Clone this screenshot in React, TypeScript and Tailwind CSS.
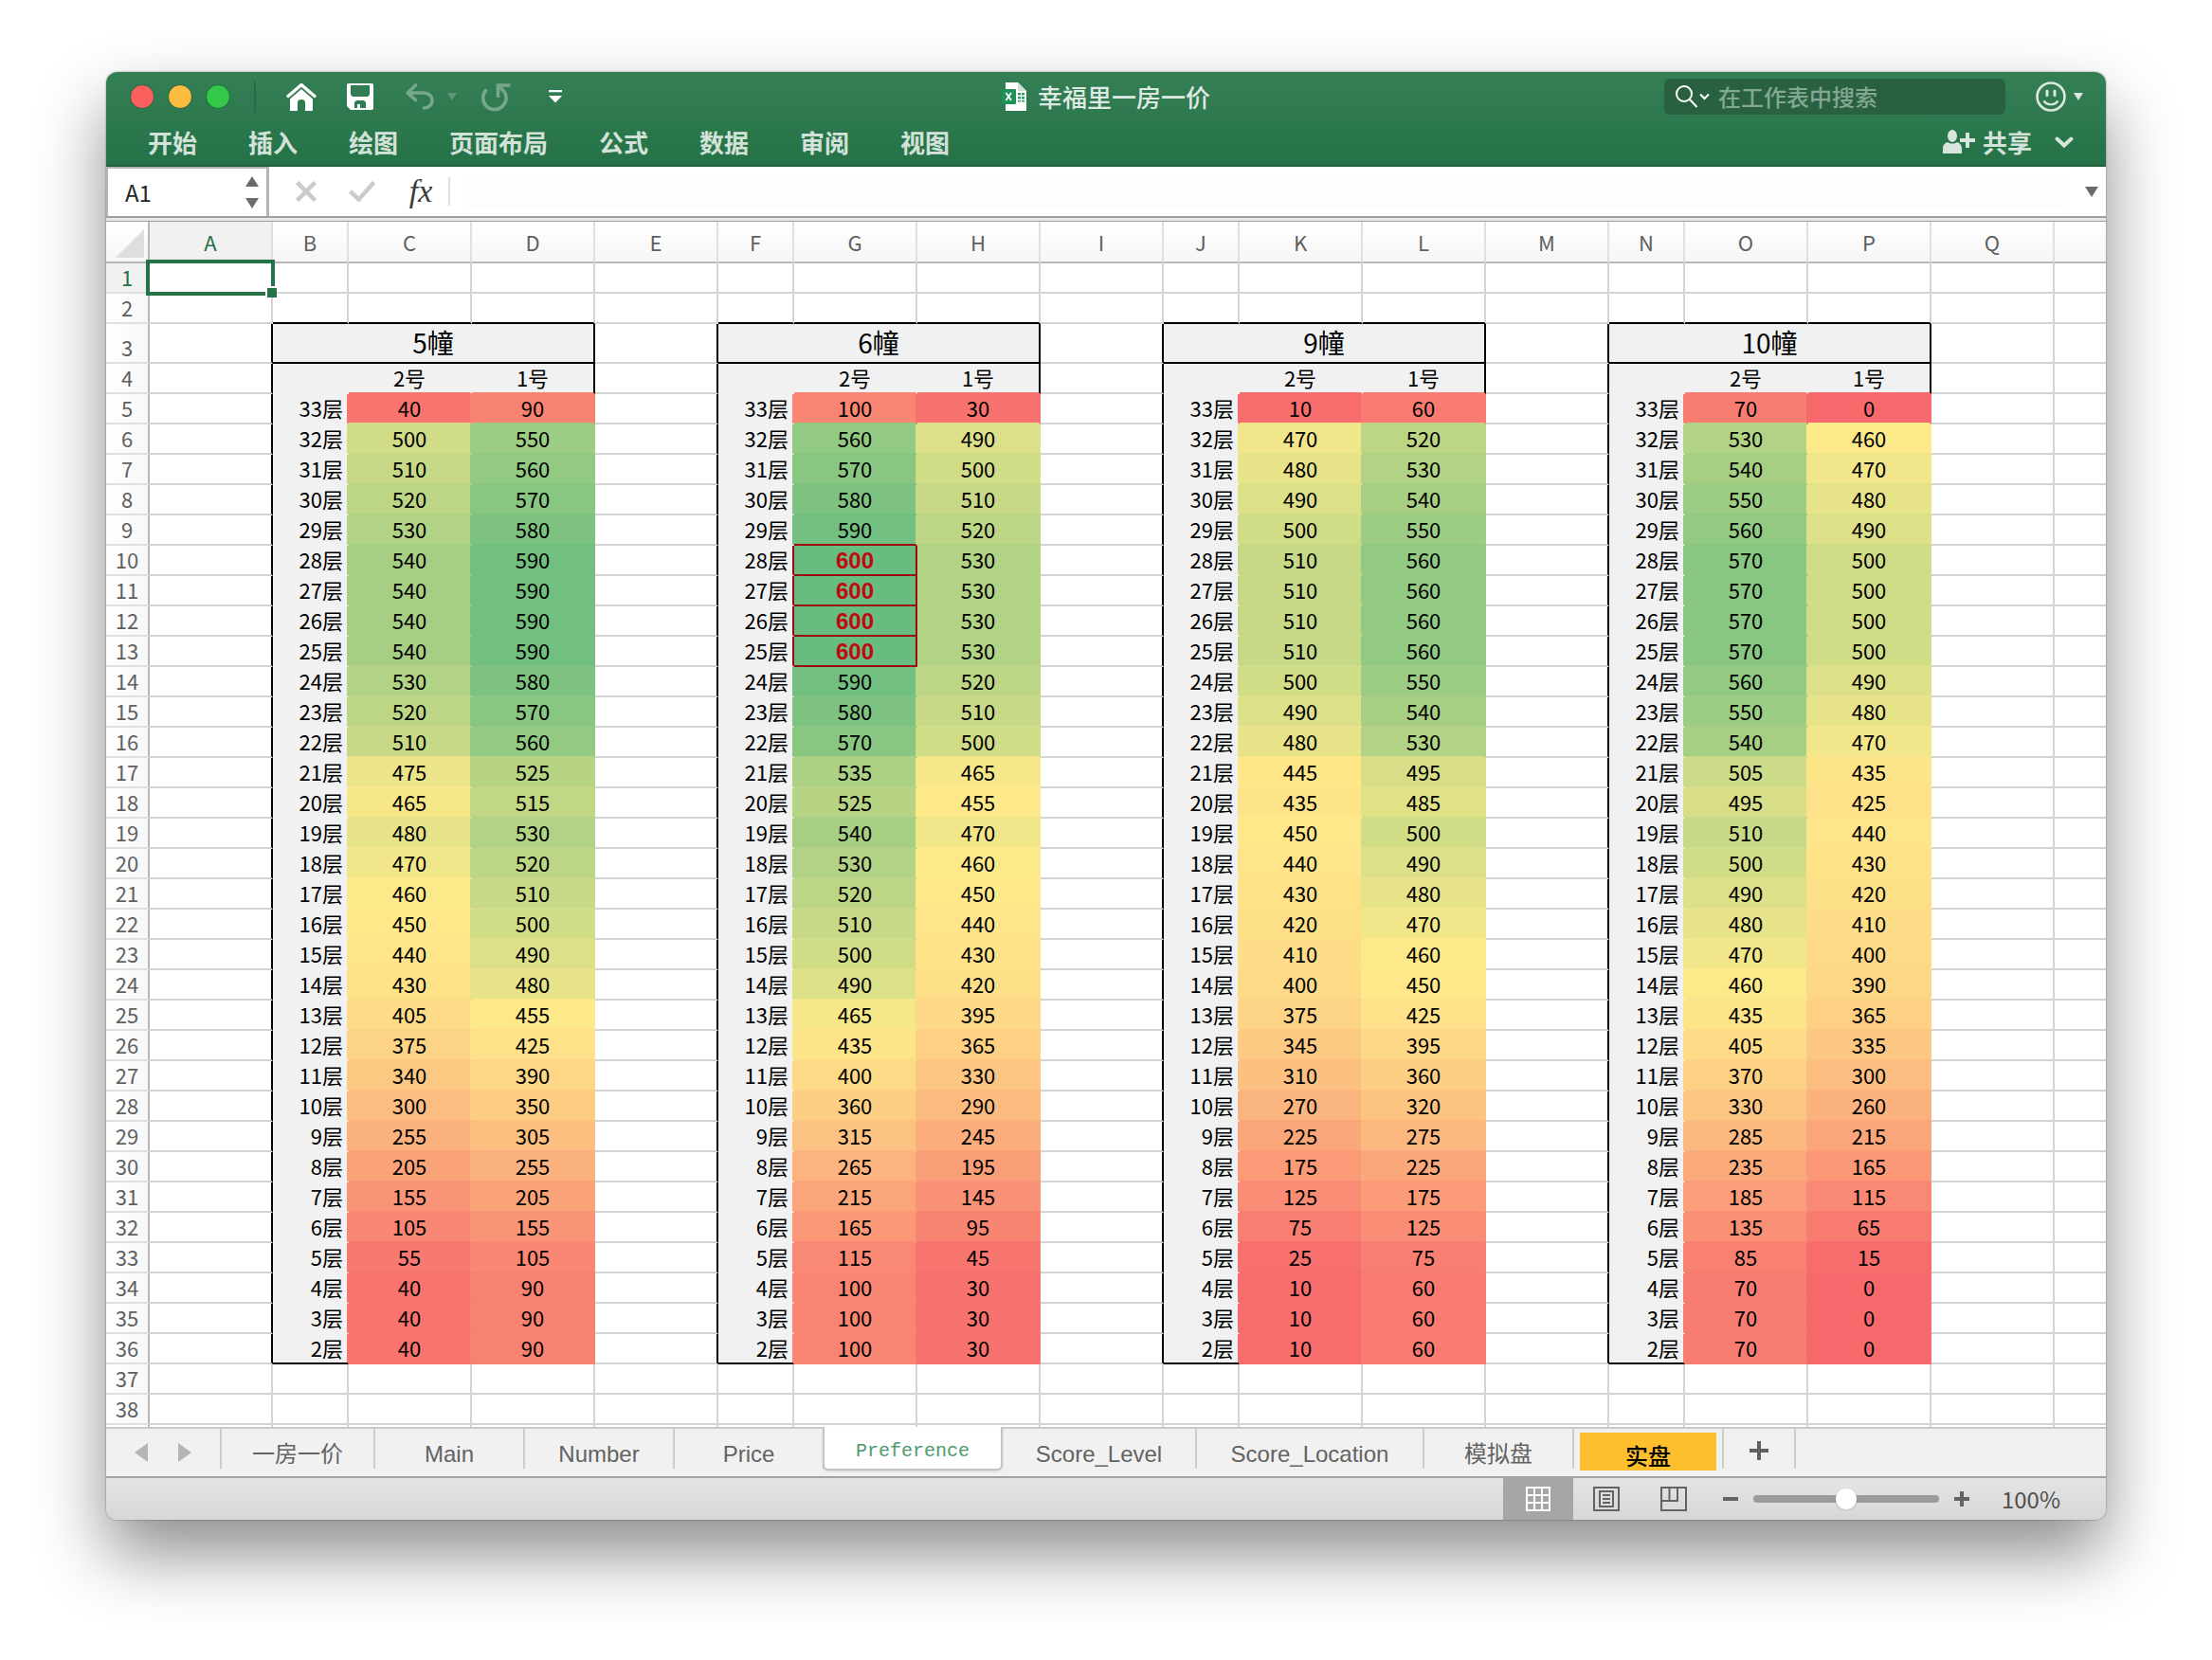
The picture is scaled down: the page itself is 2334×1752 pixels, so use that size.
import { Fragment, useState } from 'react'

const COLUMNS = ['A', 'B', 'C', 'D', 'E', 'F', 'G', 'H', 'I', 'J', 'K', 'L', 'M', 'N', 'O', 'P', 'Q', '']
const ROWS = Array.from({ length: 38 }, (_, i) => i + 1)
const MENUS = ['开始', '插入', '绘图', '页面布局', '公式', '数据', '审阅', '视图']

const BUILDINGS = [
  { name: '5幢', offsets: [0, 50] },
  { name: '6幢', offsets: [60, -10] },
  { name: '9幢', offsets: [-30, 20] },
  { name: '10幢', offsets: [30, -40] },
]

// from floor 33 down to floor 2
const BASE = [
  40, 500, 510, 520, 530, 540, 540, 540, 540, 530, 520, 510, 475, 465, 480, 470,
  460, 450, 440, 430, 405, 375, 340, 300, 255, 205, 155, 105, 55, 40, 40, 40,
]

const TOP_FLOOR = 33
const FIRST = 5
const LAST = 36

const GRID = '#d4d4d4'
const LABEL = '#f1f1f1'
const BLACK = '#000000'
const RED = '#9c0a10'

const LOW = [247, 105, 108]
const MID = [254, 234, 138]
const HIGH = [104, 188, 128]

const allValues = BUILDINGS.flatMap((b) => b.offsets.flatMap((o) => BASE.map((v) => v + o))).sort((a, b) => a - b)
const median = (allValues[127] + allValues[128]) / 2

function scaleColor(value: number) {
  const [from, to, t] =
    value <= median
      ? ([LOW, MID, value / median] as const)
      : ([MID, HIGH, (value - median) / (600 - median)] as const)
  const rgb = from.map((c, i) => Math.round(c + (to[i] - c) * t))
  return `rgb(${rgb.join(',')})`
}

// position of a column inside a building block: 0 label, 1-2 values, 3 gap
function blockPart(col: number) {
  return col < 1 || col > 15 ? 3 : (col - 1) % 4
}

function valueAt(row: number, col: number) {
  const part = blockPart(col)
  if (row < FIRST || row > LAST || part === 0 || part === 3) return null
  const building = BUILDINGS[Math.floor((col - 1) / 4)]
  return BASE[row - FIRST] + building.offsets[part - 1]
}

function fillAt(row: number, col: number) {
  if (row < 3 || row > LAST || blockPart(col) === 3) return null
  const value = valueAt(row, col)
  return value === null ? LABEL : scaleColor(value)
}

function rightEdge(row: number, col: number) {
  if (valueAt(row, col) === 600 || valueAt(row, col + 1) === 600) return RED
  if (row >= 3 && row <= LAST) {
    if (blockPart(col) === 3 && blockPart(col + 1) === 0) return BLACK
    if (blockPart(col) === 2 && row <= 4) return BLACK
  }
  return fillAt(row, col + 1) ?? fillAt(row, col) ?? GRID
}

function bottomEdge(row: number, col: number) {
  if (valueAt(row, col) === 600 || valueAt(row + 1, col) === 600) return RED
  const part = blockPart(col)
  if (part !== 3 && (row === 2 || row === 3)) return BLACK
  if (part === 0 && row === LAST) return BLACK
  return fillAt(row + 1, col) ?? fillAt(row, col) ?? GRID
}

function textAt(row: number, col: number) {
  const part = blockPart(col)
  if (part === 3) return ''
  if (row === 4) return part === 0 ? '' : part === 1 ? '2号' : '1号'
  if (part === 0 && row >= FIRST && row <= LAST) return `${TOP_FLOOR - (row - FIRST)}层`
  return valueAt(row, col) ?? ''
}

function Cell({ row, col }: { row: number; col: number }) {
  const part = blockPart(col)
  if (row === 3 && (part === 1 || part === 2)) return null
  const isTitle = row === 3 && part === 0
  const peak = valueAt(row, col) === 600
  const selected = row === 1 && col === 0
  const align = part === 0 && !isTitle ? 'text-right pr-1' : 'text-center'

  return (
    <td
      colSpan={isTitle ? 3 : 1}
      className={`relative border-b-2 ${col === 17 ? '' : 'border-r-2'} ${align} ${
        isTitle ? 'pb-0.5 align-middle text-[28px] leading-9' : 'align-bottom leading-7'
      } ${
        peak
          ? "font-['Liberation_Sans',sans-serif] text-[24px] font-bold text-[#c00a12]"
          : isTitle
            ? 'text-black'
            : 'pb-0.5 text-[22px] text-black'
      }`}
      style={{
        backgroundColor: fillAt(row, col) ?? '#ffffff',
        borderRightColor: rightEdge(row, isTitle ? col + 2 : col),
        borderBottomColor: bottomEdge(row, col),
      }}
    >
      {isTitle ? BUILDINGS[(col - 1) / 4].name : textAt(row, col)}
      {selected && (
        <>
          <span className="absolute -inset-1 z-10 border-4 border-[#257247]" />
          <span className="absolute -right-1.5 -bottom-1.5 z-10 size-3 border-t-2 border-l-2 border-white bg-[#257247]" />
        </>
      )}
    </td>
  )
}

function Sheet() {
  return (
    <table className="w-full table-fixed border-separate border-spacing-0">
      <colgroup>
        <col className="w-[46px]" />
        {COLUMNS.map((name, i) => (
          <col key={i} className={name === '' ? '' : blockPart(i) === 0 ? 'w-20' : 'w-[130px]'} />
        ))}
      </colgroup>
      <thead>
        <tr className="h-11 bg-linear-to-b from-white to-[#f5f5f5]">
          <th className="border-r-2 border-b-2 border-[#b8b8b8] p-0">
            <svg viewBox="0 0 44 42" className="h-[42px] w-11" aria-label="全选">
              <path d="M40 8V38H10Z" fill="#dedede" />
            </svg>
          </th>
          {COLUMNS.map((name, i) => (
            <th
              key={i}
              className={`border-b-2 border-r-[#e0e0e0] border-b-[#b8b8b8] p-0 text-[22px] font-normal ${
                name ? 'border-r-2' : ''
              } ${i === 0 ? 'bg-[#f1f1f1] text-[#257247]' : 'text-[#5f5f5f]'}`}
            >
              {name}
            </th>
          ))}
        </tr>
      </thead>
      <tbody>
        {ROWS.map((row) => (
          <tr key={row} className={row === 3 ? 'h-[42px]' : 'h-8'}>
            <th
              className={`border-r-2 border-b-2 border-r-[#b8b8b8] border-b-[#e0e0e0] px-0 pb-0.5 align-bottom text-[22px] leading-7 font-normal ${
                row === 1 ? 'bg-[#f1f1f1] text-[#257247]' : 'bg-linear-to-r from-white to-[#f7f7f7] text-[#5f5f5f]'
              }`}
            >
              {row}
            </th>
            {COLUMNS.map((_, col) => (
              <Cell key={col} row={row} col={col} />
            ))}
          </tr>
        ))}
        <tr className="h-0.5">
          <td className="border-r-2 border-[#b8b8b8] p-0" />
          {COLUMNS.map((name, i) => (
            <td key={i} className={`border-[#d4d4d4] p-0 ${name ? 'border-r-2' : ''}`} />
          ))}
        </tr>
      </tbody>
    </table>
  )
}

function TitleBar() {
  return (
    <div className="grid h-[52px] grid-cols-[1fr_auto_1fr] items-center">
      <div className="flex items-center">
        <div className="ml-[25px] flex gap-[14px]">
          <button aria-label="关闭" className="size-[26px] rounded-full border border-[#2a6344] bg-[#fc605c]" />
          <button aria-label="最小化" className="size-[26px] rounded-full border border-[#2a6344] bg-[#fdbc40]" />
          <button aria-label="缩放" className="size-[26px] rounded-full border border-[#1d6b38] bg-[#34c84a]" />
        </div>
        <div className="ml-[25px] h-8 w-0.5 bg-[#2a6847]" />
        <button aria-label="主页" className="ml-8">
          <svg viewBox="0 0 32 32" className="size-8" fill="none">
            <path
              d="M2 15.500 16 3.500l14 12"
              stroke="#fff"
              strokeWidth="3.400"
              strokeLinecap="round"
              strokeLinejoin="round"
            />
            <path d="M16 8 4 18.500V31h8V22c0-2 1.500-3 4-3s4 1 4 3v9h8V18.500Z" fill="#fff" />
          </svg>
        </button>
        <button aria-label="保存" className="ml-8">
          <svg viewBox="0 0 28 28" className="size-7">
            <path
              fillRule="evenodd"
              fill="#fff"
              d="M2 0h24a2 2 0 0 1 2 2v24a2 2 0 0 1-2 2H4l-4-4V2a2 2 0 0 1 2-2Zm2 2v10l2 2h16l2-2V2Zm6 16-2 2v6h3v-4h3v4h6v-6l-2-2Z"
            />
          </svg>
        </button>
        <button aria-label="撤销" className="ml-[34px] flex items-center gap-[14px]">
          <svg
            viewBox="0 0 30 28"
            className="h-7 w-[30px]"
            fill="none"
            stroke="#78a78b"
            strokeWidth="3.600"
            strokeLinecap="round"
            strokeLinejoin="round"
          >
            <path d="M10.500 2 2 10l8.500 7.500M2.500 10h16.500c5.500 0 9 3.500 9 8s-3.500 8-8.500 8" />
          </svg>
          <svg viewBox="0 0 10 8" className="h-2 w-2.5">
            <path d="M0 0h10L5 8Z" fill="#5f9574" />
          </svg>
        </button>
        <button aria-label="重做" className="ml-[25px]">
          <svg viewBox="0 0 32 32" className="size-8" fill="none" stroke="#78a78b" strokeWidth="3.600">
            <path d="M5.500 9.500A12.200 12.200 0 1 0 25 10.500Q22.500 8 19 5" strokeLinecap="round" />
            <path d="M18.500 17V4H31.500" />
          </svg>
        </button>
        <button aria-label="自定义快速访问工具栏" className="ml-10">
          <svg viewBox="0 0 14 14" className="size-3.5" fill="#fff">
            <path d="M0 0h14v2.200H0ZM0 6h14L7 13.500Z" />
          </svg>
        </button>
      </div>

      <div className="flex items-center gap-3">
        <svg viewBox="0 0 26 30" className="h-[30px] w-[26px]">
          <path d="M4 0h13l9 9v21H4Z" fill="#fff" />
          <path d="M17 0v9h9Z" fill="#d5dfd9" />
          <path d="M17 11h3v2.500h-3Zm4 0h3v2.500h-3ZM17 15h3v2.500h-3Zm4 0h3v2.500h-3ZM17 19h3v1.500h-3Zm4 0h3v1.500h-3Z" fill="#2c9c63" />
          <rect y="7" width="15" height="16" rx="1" fill="#1f9156" />
          <path d="m4.500 11 5.500 8M10 11l-5.500 8" stroke="#fff" strokeWidth="1.800" />
        </svg>
        <h1 className="text-[26px] leading-9 font-medium text-[#dfe9e3]">幸福里一房一价</h1>
      </div>

      <div className="flex items-center justify-end pr-6">
        <label className="mr-8 flex h-[38px] w-[360px] items-center rounded-md bg-[#296040] pl-3">
          <svg viewBox="0 0 36 26" className="mr-[9px] h-[26px] w-9 shrink-0" fill="none" stroke="#fff" strokeWidth="2">
            <circle cx="9" cy="10" r="8" />
            <path d="m15 16 7.500 8M26 10.500l4.500 4.500 4.500-4.500" />
          </svg>
          <input
            aria-label="搜索"
            placeholder="在工作表中搜索"
            className="w-full bg-transparent text-[24px] font-medium outline-none placeholder:text-[#83a892]"
          />
        </label>
        <button aria-label="反馈" className="flex items-center gap-2">
          <svg viewBox="0 0 32 32" className="size-8" fill="none" stroke="#dbe7e0" strokeWidth="2.600">
            <circle cx="16" cy="16" r="14.500" />
            <path d="M12 10v4.500M20 10v4.500" strokeWidth="3" strokeLinecap="round" />
            <path d="M8.500 20.500c3.500 5 11.500 5 15 0" strokeWidth="2.200" />
          </svg>
          <svg viewBox="0 0 10 8" className="h-2 w-2.5">
            <path d="M0 0h10L5 8Z" fill="#dbe7e0" />
          </svg>
        </button>
      </div>
    </div>
  )
}

function MenuBar() {
  return (
    <div className="flex h-12 items-center justify-between pr-[34px] pb-1 pl-[17px] text-[26px] font-bold text-[#d3e2d9]">
      <nav className="flex">
        {MENUS.map((menu) => (
          <button key={menu} className="px-[27px] leading-9">
            {menu}
          </button>
        ))}
      </nav>
      <div className="flex items-center">
        <button className="flex items-center gap-2 leading-9">
          <svg viewBox="0 0 34 26" className="h-[26px] w-[34px]" fill="#d8e5dd">
            <ellipse cx="10" cy="6.500" rx="5" ry="6.500" />
            <path d="M0 25v-5c0-4 2-6 5-7 3 2 7 2 10 0 3 1 5 3 5 7v5ZM18 9h6V3h4v6h6v4h-6v6h-4v-6h-6Z" />
          </svg>
          共享
        </button>
        <button aria-label="折叠功能区" className="ml-6">
          <svg viewBox="0 0 20 14" className="h-3.5 w-5" fill="none" stroke="#d8e5dd" strokeWidth="4" strokeLinecap="round">
            <path d="m2.500 3.500 7.500 7 7.500-7" />
          </svg>
        </button>
      </div>
    </div>
  )
}

function FormulaBar() {
  return (
    <div className="flex h-[52px] items-stretch bg-white">
      <div className="flex w-[172px] items-center border-t-2 border-r-3 border-l-2 border-[#b5b5b5] pr-2">
        <input
          aria-label="名称框"
          defaultValue="A1"
          className="w-full pl-[18px] text-[24px] leading-8 text-[#262626] outline-none"
        />
        <button aria-label="选择名称">
          <svg viewBox="0 0 14 34" className="h-[34px] w-3.5" fill="#6b6b6b">
            <path d="M0 11 7 0l7 11ZM0 23h14L7 34Z" />
          </svg>
        </button>
      </div>
      <div className="flex items-center">
        <button aria-label="取消" className="ml-7">
          <svg viewBox="0 0 22 22" className="size-[22px]" stroke="#cbcbcb" strokeWidth="4.500">
            <path d="m1.500 1.500 19 19M20.500 1.500l-19 19" />
          </svg>
        </button>
        <button aria-label="输入" className="ml-[34px]">
          <svg viewBox="0 0 28 22" className="h-[22px] w-7" fill="none" stroke="#cbcbcb" strokeWidth="4.500">
            <path d="m1.500 11 9 8.500L26.500 1.500" />
          </svg>
        </button>
        <button
          aria-label="插入函数"
          className="ml-8 w-8 font-['Liberation_Serif',serif] text-[34px] leading-8 text-[#3c3c3c] italic"
        >
          fx
        </button>
        <div className="ml-[13px] h-[30px] w-0.5 bg-[#e0e0e0]" />
      </div>
      <input aria-label="编辑栏" className="my-2 ml-[14px] min-w-0 flex-1 bg-[#fdfdfd] text-[24px] outline-none" />
      <button aria-label="展开编辑栏" className="mr-2 ml-[22px]">
        <svg viewBox="0 0 14 11" className="h-[11px] w-3.5">
          <path d="M0 0h14L7 11Z" fill="#6b6b6b" />
        </svg>
      </button>
    </div>
  )
}

const TABS = [
  { name: '一房一价', width: 'w-[162px]' },
  { name: 'Main', width: 'w-[158px]' },
  { name: 'Number', width: 'w-[158px]' },
  { name: 'Price', width: 'w-[158px]' },
  { name: 'Preference', width: 'w-[190px]' },
  { name: 'Score_Level', width: 'w-[205px]' },
  { name: 'Score_Location', width: 'w-[240px]' },
  { name: '模拟盘', width: 'w-[158px]' },
  { name: '实盘', width: 'w-[158px]' },
]

function SheetTabs() {
  return (
    <div className="flex h-[54px] items-start border-t-2 border-b-2 border-t-[#c9c9c9] border-b-[#a2a2a2] bg-[#f1f1f1]">
      <div className="flex h-[42px] w-[122px] items-center gap-8 border-r-2 border-[#cdcdcd] pt-2 pl-[30px]">
        <button aria-label="上一张">
          <svg viewBox="0 0 14 20" className="h-5 w-3.5">
            <path d="M14 0v20L0 10Z" fill="#b4b4b4" />
          </svg>
        </button>
        <button aria-label="下一张">
          <svg viewBox="0 0 14 20" className="h-5 w-3.5">
            <path d="M0 0v20l14-10Z" fill="#b4b4b4" />
          </svg>
        </button>
      </div>
      {TABS.map(({ name, width }) => (
        <Fragment key={name}>
          {name === 'Preference' ? (
            <button
              className={`-mt-0.5 -ml-0.5 h-[46px] rounded-b-md border-x-2 border-b-2 border-[#c4c4c4] bg-white pt-2 font-['Liberation_Mono',monospace] text-[20px] text-[#4d9a6d] shadow-sm ${width}`}
            >
              {name}
            </button>
          ) : name === '实盘' ? (
            <div className={`flex h-[42px] border-r-2 border-[#cdcdcd] ${width}`}>
              <button className="mx-1.5 mt-1 h-10 flex-1 bg-[#fdbf2d] pt-2 text-[24px] leading-8 font-medium text-black">{name}</button>
            </div>
          ) : (
            <button
              className={`h-[42px] border-r-2 border-[#cdcdcd] pt-3 font-['Liberation_Sans','Noto_Sans_CJK_SC',sans-serif] text-[24px] leading-[30px] text-[#636363] ${width}`}
            >
              {name}
            </button>
          )}
        </Fragment>
      ))}
      <button aria-label="新建工作表" className="flex h-[42px] w-[76px] items-center justify-center border-r-2 border-[#cdcdcd] pt-1">
        <svg viewBox="0 0 20 20" className="size-5" stroke="#5f5f5f" strokeWidth="4">
          <path d="M10 0v20M0 10h20" />
        </svg>
      </button>
    </div>
  )
}

function StatusBar() {
  const [zoom, setZoom] = useState(100)
  return (
    <div className="flex h-11 items-center justify-end bg-linear-to-b from-[#e4e4e4] to-[#d7d7d7] pr-12">
      <button aria-label="普通视图" className="flex h-11 w-[74px] items-center justify-center bg-[#a6a6a6]">
        <svg viewBox="0 0 26 26" className="size-[26px]" fill="none" stroke="#fff" strokeWidth="2">
          <path d="M1 1h24v24H1ZM9 1v24M17 1v24M1 9h24M1 17h24" />
        </svg>
      </button>
      <button aria-label="页面布局视图" className="ml-[21px]">
        <svg viewBox="0 0 28 26" className="h-[26px] w-7" fill="none" stroke="#636363" strokeWidth="2">
          <path d="M1 1h26v24H1ZM7 5h14v16H7ZM10 9h8M10 13h8M10 17h8" />
        </svg>
      </button>
      <button aria-label="分页预览" className="ml-[43px]">
        <svg viewBox="0 0 28 26" className="h-[26px] w-7" fill="none" stroke="#636363" strokeWidth="2">
          <path d="M1 1h26v24H1ZM1 15h17V1M9.500 1v14" />
        </svg>
      </button>
      <button aria-label="缩小" className="ml-[38px]">
        <svg viewBox="0 0 16 16" className="size-4" stroke="#636363" strokeWidth="4">
          <path d="M0 8h16" />
        </svg>
      </button>
      <input
        type="range"
        aria-label="缩放"
        min={10}
        max={190}
        value={zoom}
        onChange={(e) => setZoom(Number(e.target.value))}
        className="mx-4 h-2 w-[196px] appearance-none rounded-full bg-[#9b9b9b] [&::-webkit-slider-thumb]:size-[22px] [&::-webkit-slider-thumb]:appearance-none [&::-webkit-slider-thumb]:rounded-full [&::-webkit-slider-thumb]:bg-white [&::-webkit-slider-thumb]:shadow"
      />
      <button aria-label="放大">
        <svg viewBox="0 0 16 16" className="size-4" stroke="#636363" strokeWidth="4">
          <path d="M8 0v16M0 8h16" />
        </svg>
      </button>
      <span className="ml-[34px] text-[24px] leading-8 text-[#4f4f4f]">{zoom}%</span>
    </div>
  )
}

export default function App() {
  return (
    <div className="bg-white px-28 pt-[76px] pb-[148px] font-['Noto_Sans_CJK_SC',sans-serif]">
      <div className="overflow-hidden rounded-xl bg-white shadow-[0_36px_72px_rgba(0,0,0,0.45),0_0_2px_rgba(0,0,0,0.5)]">
        <header className="border-b-2 border-[#225f3e] bg-linear-to-b from-[#357f55] to-[#257247]">
          <TitleBar />
          <div className="-mb-0.5">
            <MenuBar />
          </div>
        </header>
        <FormulaBar />
        <div className="h-1.5 border-t-2 border-b border-[#a0a0a0] bg-[#e8e8e8]" />
        <Sheet />
        <SheetTabs />
        <StatusBar />
      </div>
    </div>
  )
}
